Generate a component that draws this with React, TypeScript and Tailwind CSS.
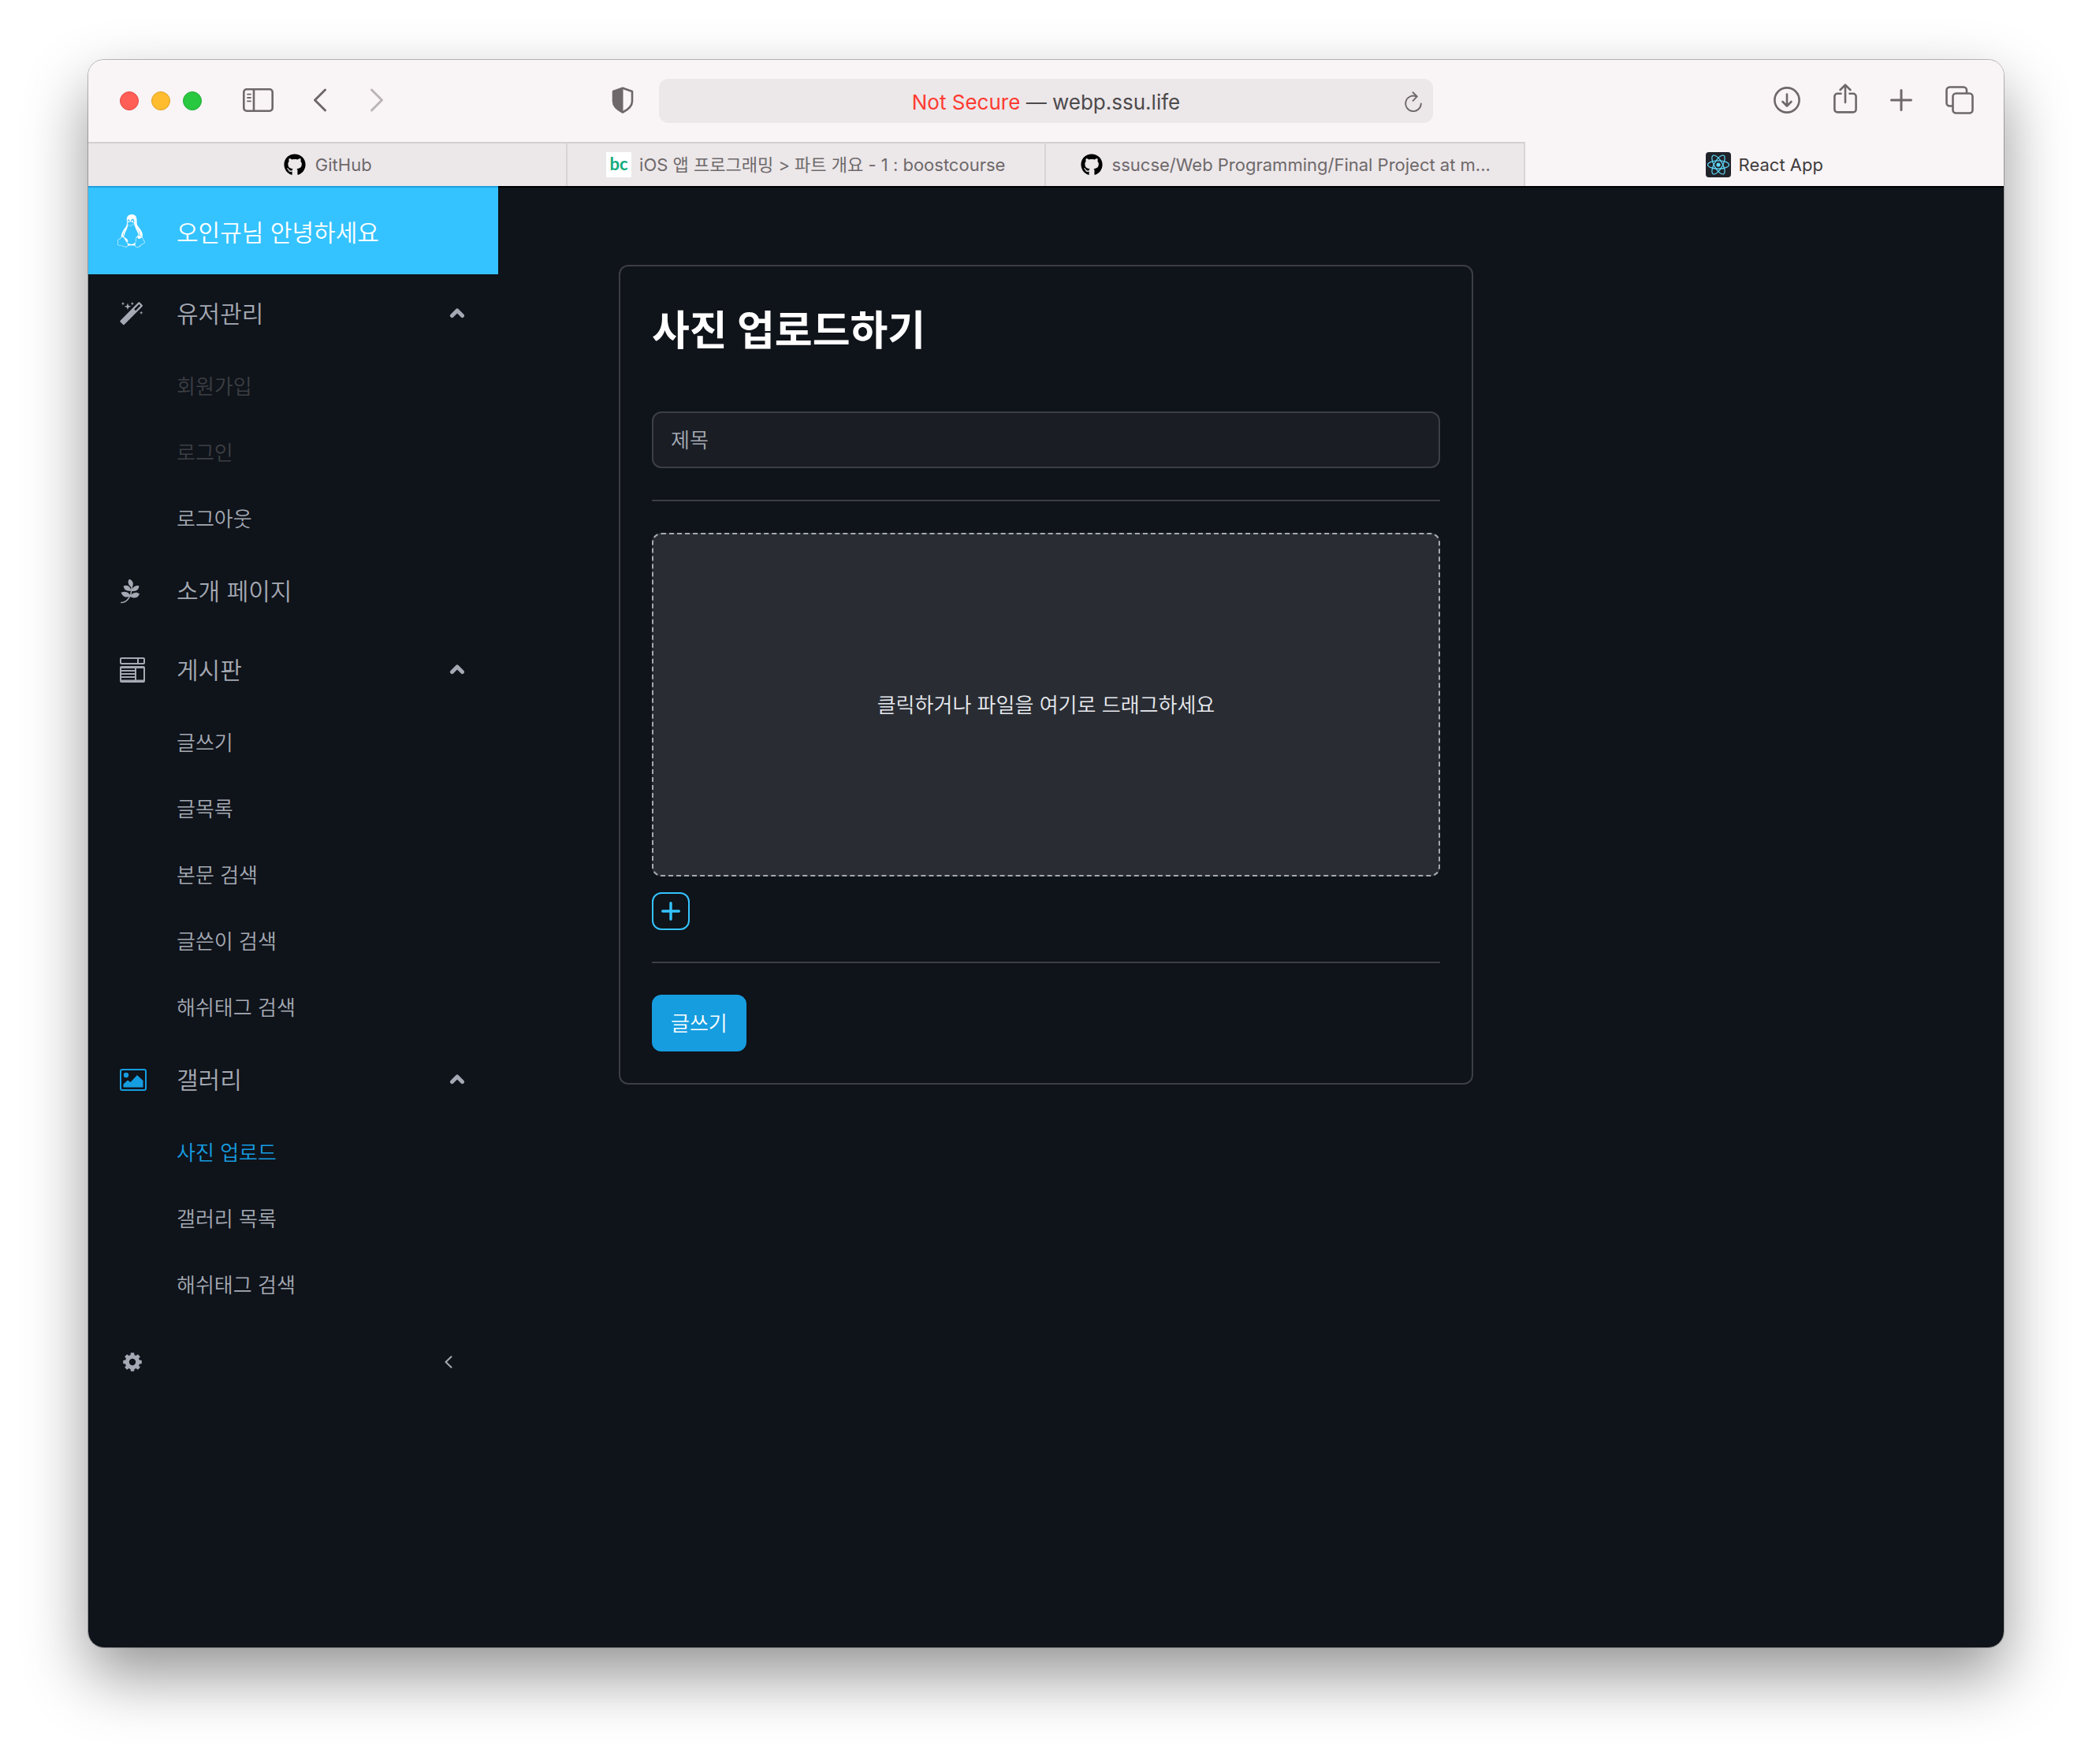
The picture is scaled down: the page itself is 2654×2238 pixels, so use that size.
import React, { useState } from "react";
import { FaGithub, FaLinux, FaPagelines } from "react-icons/fa";

function SidebarIcon() {
  return (
    <svg className="h-[30px] w-[39px]" viewBox="0 0 39 30" fill="none" stroke="currentColor" strokeWidth="2.6">
      <rect x="1.3" y="1.3" width="36.4" height="27.4" rx="3.6" />
      <path d="M14 1.5v27" />
      <path d="M6 7.6h4M6 12h4M6 16.4h4" strokeWidth="1.8" strokeLinecap="round" />
    </svg>
  );
}

function Chevron({ d }: { d: string }) {
  return (
    <svg className="h-[30px] w-[18px]" viewBox="0 0 18 30" fill="none" stroke="currentColor" strokeWidth="3" strokeLinecap="round" strokeLinejoin="round">
      <path d={d} />
    </svg>
  );
}

function ShieldIcon() {
  return (
    <svg className="h-[34px] w-[28px]" viewBox="0 0 28 34">
      <path d="M14 1.8 26 6v12.5c0 6.5-5 10.5-12 14-7-3.5-12-7.5-12-14V6Z" fill="none" stroke="currentColor" strokeWidth="2.6" strokeLinejoin="round" />
      <path d="M14.5 2v30.5C7 29 2 25 2 18.5V6Z" fill="currentColor" />
    </svg>
  );
}

function ReloadIcon() {
  return (
    <svg className="h-[26px] w-[22px]" viewBox="0 0 22 26" fill="none" stroke="currentColor" strokeWidth="1.9" strokeLinecap="round" strokeLinejoin="round">
      <path d="M20.8 15.5A9.8 9.8 0 1 1 14.8 6.3" />
      <path d="M10.5 1.2 15.8 6.4 10.5 11.8" />
    </svg>
  );
}

function DownloadIcon() {
  return (
    <svg className="size-[34px]" viewBox="0 0 34 34" fill="none" stroke="currentColor" strokeWidth="2.6" strokeLinecap="round" strokeLinejoin="round">
      <circle cx="17" cy="17" r="15.6" />
      <path d="M17 9.5V24M11.5 19l5.5 5.5 5.5-5.5" />
    </svg>
  );
}

function ShareIcon() {
  return (
    <svg className="h-[38px] w-[30px]" viewBox="0 0 30 38" fill="none" stroke="currentColor" strokeWidth="2.6" strokeLinecap="round" strokeLinejoin="round">
      <path d="M9.5 12.8H5a3.6 3.6 0 0 0-3.6 3.6v16.4A3.6 3.6 0 0 0 5 36.4h20a3.6 3.6 0 0 0 3.6-3.6V16.4a3.6 3.6 0 0 0-3.6-3.6h-4.5" />
      <path d="M15 24V2M8.6 8 15 1.7 21.4 8" />
    </svg>
  );
}

function PlusIcon() {
  return (
    <svg className="size-[28px]" viewBox="0 0 28 28" fill="none" stroke="currentColor" strokeWidth="3" strokeLinecap="round">
      <path d="M14 1.5v25M1.5 14h25" />
    </svg>
  );
}

function TabsIcon() {
  return (
    <svg className="size-[36px]" viewBox="0 0 36 36" fill="none" stroke="currentColor" strokeWidth="2.6" strokeLinejoin="round">
      <rect x="9.5" y="9.5" width="25" height="25" rx="4" />
      <path d="M9 25.500H5.5a4 4 0 0 1-4-4V5.5a4 4 0 0 1 4-4H23a4 4 0 0 1 4 4V9" />
    </svg>
  );
}

function ReactLogo() {
  return (
    <svg className="size-8 shrink-0" viewBox="0 0 32 32">
      <rect width="32" height="32" rx="4" fill="#20232a" />
      <g fill="none" stroke="#61dafb" strokeWidth="1.2">
        <ellipse cx="16" cy="16" rx="13.5" ry="5.2" />
        <ellipse cx="16" cy="16" rx="13.5" ry="5.2" transform="rotate(60 16 16)" />
        <ellipse cx="16" cy="16" rx="13.5" ry="5.2" transform="rotate(120 16 16)" />
      </g>
      <circle cx="16" cy="16" r="2.6" fill="#61dafb" />
    </svg>
  );
}

function BoostLogo() {
  return (
    <span className="flex size-8 shrink-0 items-center justify-center bg-white pb-0.5 font-[Lato,sans-serif] text-[22px] leading-7 font-bold text-[#13ab7c]">
      bc
    </span>
  );
}

function WandIcon() {
  return (
    <svg className="size-[30px]" viewBox="0 0 30 30" fill="currentColor">
      <path fillRule="evenodd" d="M23.3.8c.7-.7 1.5-.7 2.2 0l2.9 2.9c.7.7.7 1.5 0 2.2L6 28.6c-.7.7-1.5.7-2.2 0L.9 25.7c-.7-.7-.7-1.5 0-2.2ZM24.4 2.9 18.2 9.3l1.9 1.9 6.2-6.4Z" />
      <path d="M4 0l.6 1.6L6.2 2.2 4.6 2.8 4 4.4 3.4 2.8 1.8 2.2 3.4 1.6ZM10 1.5l1.1 3.2 3.2 1.1-3.2 1.1L10 10.1 8.9 6.9 5.7 5.8 8.9 4.7ZM15.8 0l.6 1.6 1.6.6-1.6.6-.6 1.6-.6-1.6-1.6-.6 1.6-.6ZM27.2 11.6l.6 1.6 1.6.6-1.6.6-.6 1.6-.6-1.6-1.6-.6 1.6-.6Z" />
    </svg>
  );
}

function BoardIcon() {
  return (
    <svg className="size-8" viewBox="0 0 32 32" fill="none" stroke="currentColor" strokeWidth="2">
      <rect x="1" y="1" width="30" height="7" rx="1" />
      <path d="M23 1v7" />
      <rect x="1" y="12" width="30" height="19" rx="1" />
      <path d="M1 13h30M20 13v18M20 29.5h11M1 29.5h19" />
      <path d="M1 17h19M1 21h19M1 25h19" strokeWidth="1.8" />
    </svg>
  );
}

function ImageIcon() {
  return (
    <svg className="h-[28px] w-[34px]" viewBox="0 0 34 28">
      <rect x="1" y="1" width="32" height="26" rx="2" fill="none" stroke="currentColor" strokeWidth="2" />
      <circle cx="8" cy="8" r="3.2" fill="currentColor" />
      <path d="M4.5 23.5v-4l5.5-5 3.5 2.5 8.5-9 7.5 7v8.5Z" fill="currentColor" />
    </svg>
  );
}

const gearTeeth = [0, 45, 90, 135, 180, 225, 270, 315];

function GearIcon() {
  return (
    <svg className="size-6" viewBox="0 0 24 24" fill="currentColor">
      <circle cx="12" cy="12" r="6.7" fill="none" stroke="currentColor" strokeWidth="5" />
      {gearTeeth.map((angle) => (
        <path key={angle} d="M9.3 4 9.9.2h4.2l.6 3.8Z" transform={`rotate(${angle} 12 12)`} />
      ))}
    </svg>
  );
}

function CaretUp({ open }: { open: boolean }) {
  return (
    <svg className={open ? "h-[14px] w-5" : "h-[14px] w-5 rotate-180"} viewBox="0 0 20 14" fill="none" stroke="currentColor" strokeWidth="5" strokeLinecap="round" strokeLinejoin="round">
      <path d="M3.5 9.5 10 3l6.5 6.5" />
    </svg>
  );
}

type Item = { label: string; disabled?: boolean; active?: boolean };
type Group = { label: string; icon: React.ReactNode; items?: Item[]; active?: boolean };

const groups: Group[] = [
  {
    label: "유저관리",
    icon: <WandIcon />,
    items: [{ label: "회원가입", disabled: true }, { label: "로그인", disabled: true }, { label: "로그아웃" }],
  },
  { label: "소개 페이지", icon: <FaPagelines className="h-8 w-[26px]" /> },
  {
    label: "게시판",
    icon: <BoardIcon />,
    items: [{ label: "글쓰기" }, { label: "글목록" }, { label: "본문 검색" }, { label: "글쓴이 검색" }, { label: "해쉬태그 검색" }],
  },
  {
    label: "갤러리",
    icon: <ImageIcon />,
    active: true,
    items: [{ label: "사진 업로드", active: true }, { label: "갤러리 목록" }, { label: "해쉬태그 검색" }],
  },
];

function itemColor(item: Item) {
  if (item.disabled) return "text-[#3c3f43]";
  if (item.active) return "text-[#169de0]";
  return "text-[#a4a9b3]";
}

function NavGroup({ group }: { group: Group }) {
  const [open, setOpen] = useState(true);
  return (
    <li>
      <button type="button" onClick={() => setOpen(!open)} className="flex h-[100px] w-full items-center pr-[42px] pl-10 text-left text-[30px]">
        <span className={group.active ? "flex w-[72px] text-[#169de0]" : "flex w-[72px]"}>{group.icon}</span>
        <span className="flex-1">{group.label}</span>
        {group.items && <CaretUp open={open} />}
      </button>
      {group.items && open && (
        <ul>
          {group.items.map((item) => (
            <li key={item.label}>
              <a href="#" aria-disabled={item.disabled} className={`flex h-[84px] items-center pl-28 text-[26px] ${itemColor(item)}`}>
                {item.label}
              </a>
            </li>
          ))}
        </ul>
      )}
    </li>
  );
}

const tabs = [
  { title: "GitHub", icon: <FaGithub className="mx-0.5 size-7 shrink-0 text-black" /> },
  { title: "iOS 앱 프로그래밍 > 파트 개요 - 1 : boostcourse", icon: <BoostLogo /> },
  { title: "ssucse/Web Programming/Final Project at m...", icon: <FaGithub className="mx-0.5 size-7 shrink-0 text-black" /> },
  { title: "React App", icon: <ReactLogo />, active: true },
];

function Toolbar() {
  return (
    <div className="grid h-[104px] grid-cols-[1fr_982px_1fr] items-center text-[#6e686a]">
      <div className="flex items-center pr-8 pl-10">
        <div className="flex gap-4">
          <button type="button" aria-label="Close" className="size-6 rounded-full border border-[#e2463f] bg-[#ff5f57]" />
          <button type="button" aria-label="Minimize" className="size-6 rounded-full border border-[#dfa023] bg-[#febc2e]" />
          <button type="button" aria-label="Zoom" className="size-6 rounded-full border border-[#1eab33] bg-[#28c840]" />
        </div>
        <div className="flex flex-1 items-center pb-0.5">
          <button type="button" aria-label="Show sidebar" className="ml-[52px]"><SidebarIcon /></button>
          <button type="button" aria-label="Back" className="ml-[50px]"><Chevron d="M15.5 2 2.5 15l13 13" /></button>
          <button type="button" aria-label="Forward" className="ml-[54px] text-[#bab5b7]"><Chevron d="M2.5 2l13 13-13 13" /></button>
          <button type="button" aria-label="Privacy report" className="ml-auto"><ShieldIcon /></button>
        </div>
      </div>
      <div className="flex h-14 items-center rounded-xl bg-[#ece7e9] pt-0.5 pr-3.5 pl-9 text-[26px]">
        <p className="flex-1 text-center text-[#4c4a4b]">
          <span className="text-[#ff3b30]">Not Secure</span> — webp.ssu.life
        </p>
        <button type="button" aria-label="Reload"><ReloadIcon /></button>
      </div>
      <div className="flex items-center justify-end gap-[42px] pr-[38px] pb-0.5">
        <button type="button" aria-label="Downloads"><DownloadIcon /></button>
        <button type="button" aria-label="Share" className="pb-1"><ShareIcon /></button>
        <button type="button" aria-label="New tab"><PlusIcon /></button>
        <button type="button" aria-label="Show all tabs"><TabsIcon /></button>
      </div>
    </div>
  );
}

function TabBar() {
  return (
    <div className="grid h-14 grid-cols-4 text-[22px]">
      {tabs.map((tab) => (
        <button
          key={tab.title}
          type="button"
          className={
            tab.active
              ? "flex min-w-0 items-center justify-center gap-2.5 px-4 pt-0.5 text-[#3f3c3d]"
              : "flex min-w-0 items-center justify-center gap-2.5 border-t-2 border-r-2 border-t-[#d3ced0] border-r-[#d8d3d5] bg-[#ece7e9] px-4 text-[#6e696b]"
          }
        >
          {tab.icon}
          <span className="truncate">{tab.title}</span>
        </button>
      ))}
    </div>
  );
}

function Sidebar() {
  return (
    <nav className="w-[520px] shrink-0 text-[#a4a9b3]">
      <div className="flex h-28 items-center bg-[#34c3ff] pt-1.5 pl-9 text-[30px] text-white shadow-[inset_0_2px_0_#1f9fdb]">
        <span className="flex w-[76px] pb-1"><FaLinux className="h-[42px] w-[37px]" /></span>
        오인규님 안녕하세요
      </div>
      <ul>
        {groups.map((group) => (
          <NavGroup key={group.label} group={group} />
        ))}
      </ul>
      <div className="flex h-28 items-center justify-between pr-[58px] pl-11">
        <button type="button" aria-label="Settings"><GearIcon /></button>
        <button type="button" aria-label="Collapse">
          <svg className="h-4 w-2.5" viewBox="0 0 10 16" fill="none" stroke="currentColor" strokeWidth="2" strokeLinecap="round" strokeLinejoin="round">
            <path d="M8.5 1.2 1.5 8l7 6.8" />
          </svg>
        </button>
      </div>
    </nav>
  );
}

function UploadForm() {
  return (
    <form onSubmit={(e) => e.preventDefault()} className="flex w-[1084px] flex-col items-start rounded-xl border-2 border-[#3c3f43] p-10 text-[26px]">
      <h1 className="mb-15 text-[52px] leading-[84px] font-bold text-white">사진 업로드하기</h1>
      <input
        type="text"
        aria-label="제목"
        placeholder="제목"
        className="h-[72px] w-full rounded-xl border-2 border-[#3c3f43] bg-[#1a1d24] px-[22px] text-white placeholder:text-[#a4a9b3]"
      />
      <hr className="my-10 w-full border-t-2 border-[#3c3f43]" />
      <button type="button" className="h-[436px] w-full rounded-xl border-2 border-dashed border-[#a4a9b3] bg-[#292d33] text-[#e9ebf0]">
        클릭하거나 파일을 여기로 드래그하세요
      </button>
      <button type="button" aria-label="추가" className="mt-5 flex size-12 items-center justify-center rounded-xl border-2 border-[#34c3ff] text-[#34c3ff]">
        <svg className="size-6" viewBox="0 0 24 24" fill="none" stroke="currentColor" strokeWidth="3.4" strokeLinecap="round">
          <path d="M12 1.7v20.6M1.7 12h20.6" />
        </svg>
      </button>
      <hr className="my-10 w-full border-t-2 border-[#3c3f43]" />
      <button type="submit" className="h-[72px] rounded-xl bg-[#169de0] px-6 text-white">글쓰기</button>
    </form>
  );
}

export default function App() {
  return (
    <div className="min-h-screen overflow-hidden bg-white px-28 pt-19 pb-37 font-[Inter,'Noto_Sans_CJK_KR',sans-serif]">
      <div className="rounded-[20px] shadow-[0_0_0_1px_rgba(0,0,0,0.25),0_36px_80px_rgba(0,0,0,0.42)]">
        <div className="flex min-h-[2014px] flex-col overflow-hidden rounded-[20px] bg-[#f9f4f6]">
          <Toolbar />
          <TabBar />
          <div className="flex flex-1 bg-[#0f131a] font-[350] shadow-[inset_0_2px_0_#000]">
            <Sidebar />
            <main className="flex flex-1 items-start justify-center pt-[100px] pr-[520px]">
              <UploadForm />
            </main>
          </div>
        </div>
      </div>
    </div>
  );
}
